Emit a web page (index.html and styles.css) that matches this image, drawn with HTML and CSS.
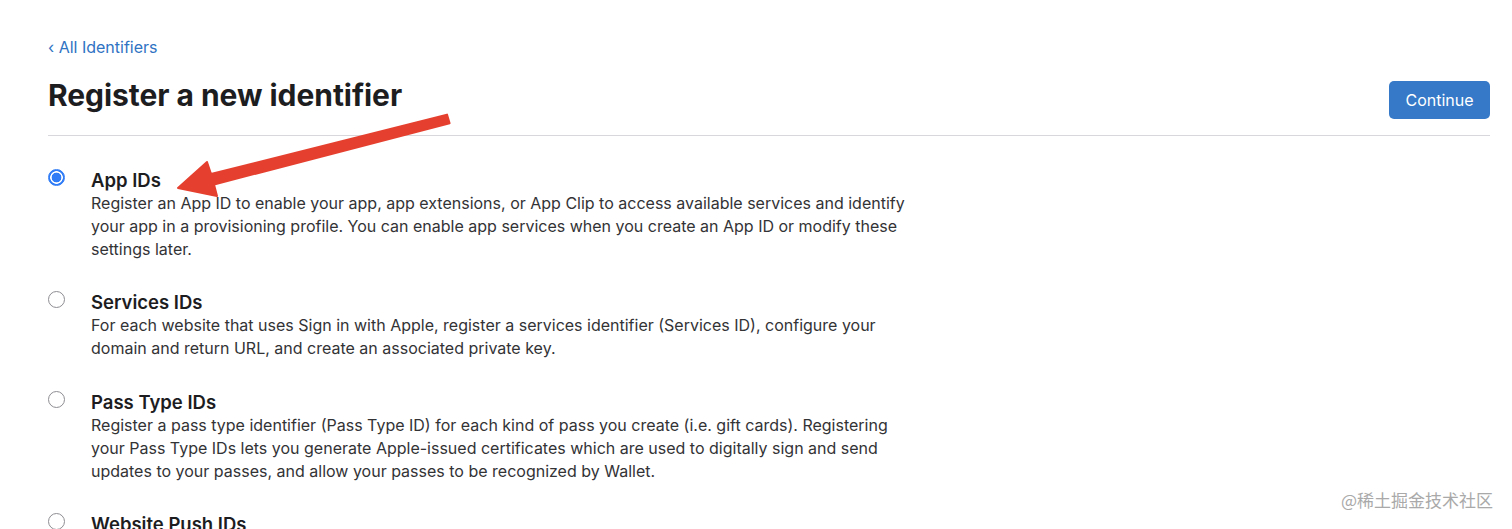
FILE: index.html
```html
<!DOCTYPE html>
<html lang="en">
<head>
    <meta charset="UTF-8">
    <title>Register a new identifier</title>
    <link rel="stylesheet" href="styles.css">
</head>
<body>
    <div class="page">
        <a class="back" href="#">&lsaquo; All Identifiers</a>
        <div class="head">
            <h1>Register a new identifier</h1>
            <button class="btn">Continue</button>
        </div>
        <ul class="options">
            <li class="option">
                <span class="radio checked"></span>
                <div class="text">
                    <h2>App IDs</h2>
                    <p>Register an App ID to enable your app, app extensions, or App Clip to access available services and identify your app in a provisioning profile. You can enable app services when you create an App ID or modify these settings later.</p>
                </div>
            </li>
            <li class="option">
                <span class="radio"></span>
                <div class="text">
                    <h2>Services IDs</h2>
                    <p>For each website that uses Sign in with Apple, register a services identifier (Services ID), configure your domain and return URL, and create an associated private key.</p>
                </div>
            </li>
            <li class="option">
                <span class="radio"></span>
                <div class="text">
                    <h2>Pass Type IDs</h2>
                    <p>Register a pass type identifier (Pass Type ID) for each kind of pass you create (i.e. gift cards). Registering your Pass Type IDs lets you generate Apple-issued certificates which are used to digitally sign and send updates to your passes, and allow your passes to be recognized by Wallet.</p>
                </div>
            </li>
            <li class="option">
                <span class="radio"></span>
                <div class="text">
                    <h2>Website Push IDs</h2>
                    <p>Register a Website Push ID to send push notifications from your website to Safari on macOS.</p>
                </div>
            </li>
        </ul>
    </div>
    <!-- 标注箭头 -->
    <svg class="arrow" width="1512" height="529" viewBox="0 0 1512 529">
        <polygon points="447,114.6 449.6,123.2 214,184.5 217,196 178,188 207,162 211,174"
                 fill="#e5402f" stroke="#e5402f" stroke-width="2" stroke-linejoin="round"/>
    </svg>
    <div class="mark">@稀土掘金技术社区</div>
</body>
</html>
```

FILE: styles.css
```css
*{
    margin: 0;
    padding: 0;
}
body{
    font-family: Inter, "Noto Sans", "Noto Sans CJK SC", sans-serif;
    color: #1d1d1f;
    background: #fff;
    height: 529px;
    overflow: hidden;
    position: relative;
}
li{
    list-style: none;
}
.page{
    padding: 37px 22px 0 48px;
}
.back{
    display: block;
    font-size: 16px;
    line-height: 21px;
    color: #2f73c3;
    text-decoration: none;
}
.head{
    display: flex;
    justify-content: space-between;
    align-items: flex-start;
    margin-top: 19px;
    padding-bottom: 16px;
    border-bottom: 1px solid #d8d8dc;
}
.head h1{
    font-size: 30px;
    line-height: 36px;
    font-weight: 700;
    letter-spacing: -0.05px;
}
.btn{
    margin-top: 4px;
    width: 101px;
    height: 38px;
    border: none;
    border-radius: 5px;
    background: #3579c8;
    color: #fff;
    font-family: inherit;
    font-size: 16px;
}
.options{
    margin-top: 33px;
}
.option{
    display: flex;
    margin-bottom: 30px;
}
.option:nth-child(2){
    margin-bottom: 31px;
}
.radio{
    flex: none;
    width: 15px;
    height: 15px;
    margin: 0 26px 0 0;
    border: 1px solid #8e8e93;
    border-radius: 50%;
    background: #fff;
}
.radio.checked{
    border-color: #2f7cf6;
    background: radial-gradient(circle, #2f7cf6 0 4.5px, #fff 5.2px 6px, #2f7cf6 6.6px);
}
.text{
    max-width: 822px;
}
.text h2{
    font-size: 18.5px;
    line-height: 23px;
    font-weight: 600;
}
.text p{
    font-size: 16px;
    line-height: 23px;
    color: #333336;
}
.arrow{
    position: absolute;
    left: 0;
    top: 0;
}
.mark{
    position: absolute;
    right: 19px;
    bottom: 17px;
    font-size: 17px;
    color: #a9a9a9;
    font-family: "Noto Sans CJK SC", sans-serif;
}
```
